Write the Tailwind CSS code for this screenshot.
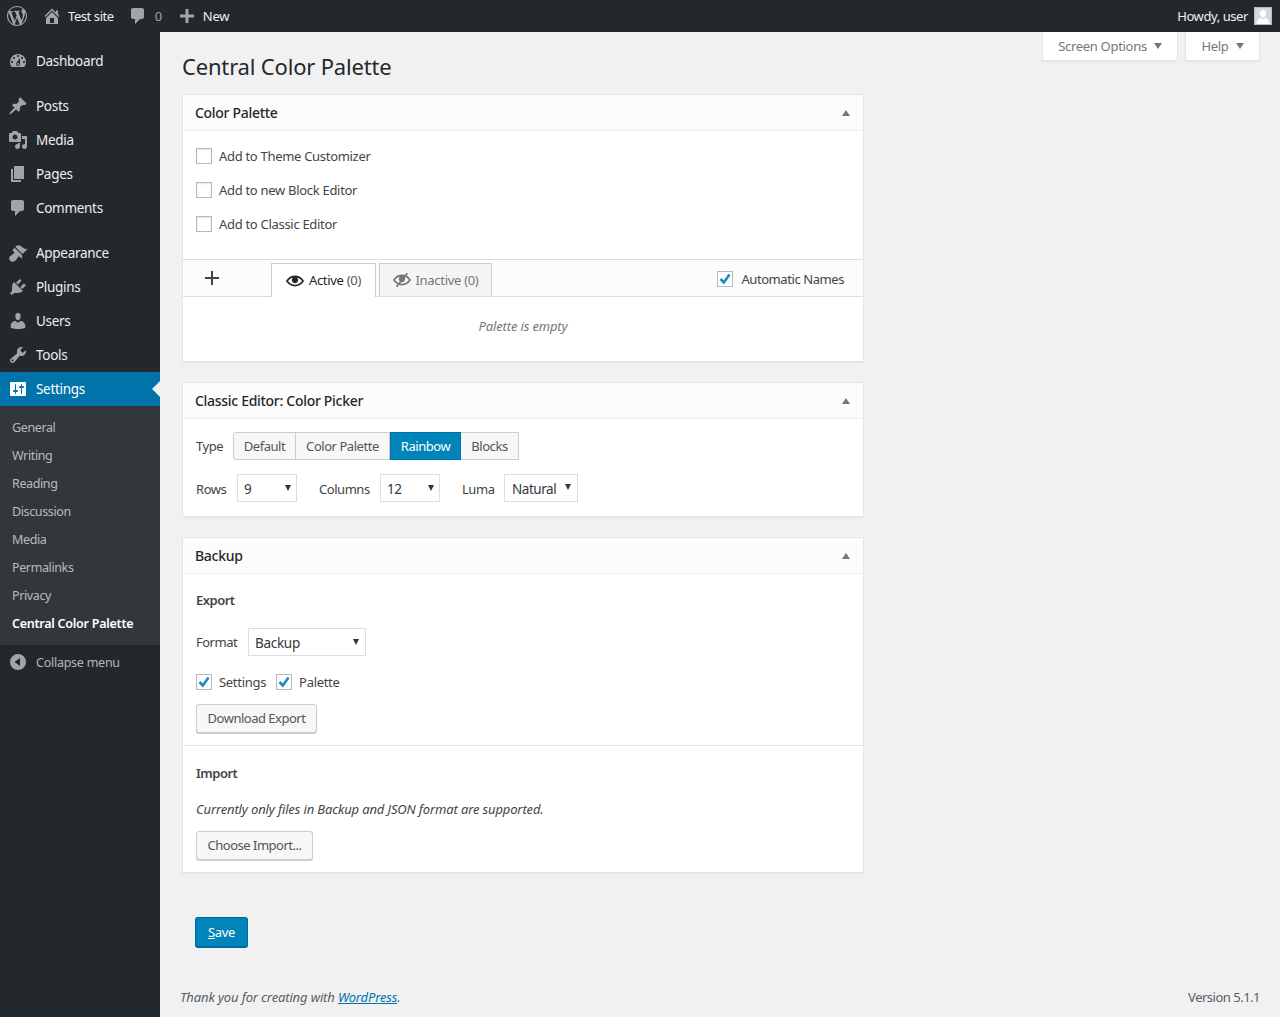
<!DOCTYPE html>
<html lang="en">
<head>
    <meta charset="UTF-8">
    <meta name="viewport" content="width=device-width, initial-scale=1.0">
    <title>Central Color Palette</title>
    <script src="https://cdn.jsdelivr.net/npm/@tailwindcss/browser@4"></script>
</head>
<body class="bg-[#f1f1f1] font-['Noto_Sans',sans-serif] text-[13px] text-[#444] tracking-[-0.3px]">
<div class="h-screen overflow-hidden flex flex-col">

    <!-- top bar -->
    <header class="h-8 shrink-0 bg-[#23282d] text-[#eee] flex items-center justify-between pl-[7px] pr-2 text-[13px] tracking-[-0.42px]">
        <div class="flex items-center">
            <svg class="w-5 h-5 fill-[#a0a5aa]" viewBox="0 0 20 20"><path d="M20 10c0-5.51-4.49-10-10-10C4.48 0 0 4.49 0 10c0 5.52 4.48 10 10 10 5.51 0 10-4.48 10-10zM7.78 15.37L4.37 6.22c.55-.02 1.17-.08 1.17-.08.5-.06.44-1.13-.06-1.11 0 0-1.45.11-2.37.11-.18 0-.37 0-.58-.01C4.12 2.69 6.87 1.11 10 1.11c2.33 0 4.45.87 6.05 2.34-.68-.11-1.65.39-1.65 1.58 0 .74.45 1.36.9 2.1.35.61.55 1.36.55 2.46 0 1.49-1.4 5-1.4 5l-3.03-8.37c.54-.02.82-.17.82-.17.5-.05.44-1.25-.06-1.22 0 0-1.44.12-2.38.12-.87 0-2.33-.12-2.33-.12-.5-.03-.56 1.2-.06 1.22l.92.08 1.26 3.41zM17.41 10c.24-.64.74-1.87.43-4.25.7 1.29 1.05 2.71 1.05 4.25 0 3.29-1.73 6.24-4.4 7.78.97-2.59 1.94-5.2 2.92-7.78zM6.1 18.09C3.12 16.65 1.11 13.53 1.11 10c0-1.3.23-2.48.72-3.59C3.25 10.3 4.67 14.2 6.1 18.09zm4.03-6.63l2.58 6.98c-.86.29-1.76.45-2.71.45-.79 0-1.57-.11-2.29-.33.81-2.38 1.62-4.74 2.42-7.1z"/></svg>
            <svg class="w-5 h-5 fill-[#a0a5aa] ml-[15px]" viewBox="0 0 20 20"><path d="M16 8.5l1.53 1.53-1.06 1.06L10 4.62l-6.47 6.47-1.06-1.06L10 2.5l4 4v-2h2v4zm-6-2.46l6 5.99V18H4v-5.97zM12 17v-5H8v5h4z"/></svg>
            <span class="ml-[6px] pt-[2px]">Test site</span>
            <svg class="w-5 h-5 fill-[#a0a5aa] ml-[14px]" viewBox="0 0 20 20"><path d="M5 2h9c1.1 0 2 .9 2 2v7c0 1.1-.9 2-2 2h-2l-5 5v-5H5c-1.1 0-2-.9-2-2V4c0-1.1.9-2 2-2z"/></svg>
            <span class="ml-[7px] pt-[2px] text-[#a0a5aa]">0</span>
            <svg class="w-5 h-5 fill-[#a0a5aa] ml-[15px]" viewBox="0 0 20 20"><path d="M17 8.500v3h-5.500V17h-3v-5.500H3v-3h5.500V3h3v5.500H17z"/></svg>
            <span class="ml-[6px] pt-[2px] tracking-[-0.3px]">New</span>
        </div>
        <div class="flex items-center gap-[6px]">
            <span class="pt-[2px]">Howdy, user</span>
            <span class="w-[18px] h-[18px] bg-[#d8d8d8] border border-[#bbb] flex items-end overflow-hidden">
                <svg class="w-4 h-4 fill-white" viewBox="0 0 16 16"><path d="M8 2c2 0 3 1.600 3 3.500S9.800 9.500 8 9.500 5 7.400 5 5.500 6 2 8 2zM1.500 16c0-3.500 2.500-5.500 4.500-6l2 1.500L10 10c2 .5 4.500 2.500 4.500 6z"/></svg>
            </span>
        </div>
    </header>

    <div class="flex flex-1 min-h-0">

        <!-- sidebar -->
        <nav class="w-40 shrink-0 bg-[#23282d] text-[#eee] text-[13.5px] pt-3">
            <a class="h-[34px] flex items-center pl-[8px] gap-[8px]"><svg class="w-5 h-5 fill-[#a0a5aa]" viewBox="0 0 20 20"><path d="M3.76 16h12.48c1.1-1.37 1.76-3.11 1.76-5 0-4.42-3.58-8-8-8s-8 3.58-8 8c0 1.89.66 3.63 1.76 5zM10 4c.55 0 1 .45 1 1s-.45 1-1 1-1-.45-1-1 .45-1 1-1zM6 6c.55 0 1 .45 1 1s-.45 1-1 1-1-.45-1-1 .45-1 1-1zm8 0c.55 0 1 .45 1 1s-.45 1-1 1-1-.45-1-1 .45-1 1-1zm-5.37 5.55L12 7v6c0 1.1-.9 2-2 2s-2-.9-2-2c0-.57.24-1.08.63-1.45zM4 10c.55 0 1 .45 1 1s-.45 1-1 1-1-.45-1-1 .45-1 1-1zm12 0c.55 0 1 .45 1 1s-.45 1-1 1-1-.45-1-1 .45-1 1-1zm-5 3c0-.55-.45-1-1-1s-1 .45-1 1 .45 1 1 1 1-.45 1-1z"/></svg><span>Dashboard</span></a>

            <a class="h-[34px] mt-[11px] flex items-center pl-[8px] gap-[8px]"><svg class="w-5 h-5 fill-[#a0a5aa]" viewBox="0 0 20 20"><path d="M10.44 3.02l1.82-1.82 6.36 6.35-1.83 1.82c-1.05-.68-2.48-.57-3.41.36l-.75.75c-.92.93-1.04 2.35-.35 3.41l-1.83 1.82-2.41-2.41-2.8 2.79c-.42.42-3.38 2.71-3.8 2.29s1.86-3.39 2.28-3.81l2.79-2.79L4.1 9.36l1.83-1.82c1.05.69 2.48.57 3.4-.36l.75-.75c.93-.92 1.05-2.35.36-3.41z"/></svg><span>Posts</span></a>
            <a class="h-[34px] flex items-center pl-[8px] gap-[8px]"><svg class="w-5 h-5 fill-[#a0a5aa]" viewBox="0 0 20 20"><path d="M13 11V4c0-.55-.45-1-1-1h-1.670L9 1H5L3.670 3H2c-.55 0-1 .45-1 1v7c0 .55.45 1 1 1h10c.55 0 1-.45 1-1zM7 4.500c1.380 0 2.500 1.120 2.500 2.500S8.380 9.500 7 9.500 4.500 8.380 4.500 7 5.620 4.500 7 4.500zM14 6h5v10.500c0 1.380-1.120 2.500-2.500 2.500S14 17.880 14 16.500s1.120-2.500 2.500-2.500c.17 0 .34.02.5.05V9h-3V6zm-4 8.050V13h2v3.500c0 1.380-1.120 2.500-2.500 2.500S7 17.880 7 16.500 8.120 14 9.500 14c.17 0 .34.02.5.05z"/></svg><span>Media</span></a>
            <a class="h-[34px] flex items-center pl-[8px] gap-[8px]"><svg class="w-5 h-5 fill-[#a0a5aa]" viewBox="0 0 20 20"><path d="M6 15V2h10v13H6zm-1 1h8v2H3V5h2v11z"/></svg><span>Pages</span></a>
            <a class="h-[34px] flex items-center pl-[8px] gap-[8px]"><svg class="w-5 h-5 fill-[#a0a5aa]" viewBox="0 0 20 20"><path d="M5 2h9c1.100 0 2 .9 2 2v7c0 1.100-.9 2-2 2h-2l-5 5v-5H5c-1.100 0-2-.9-2-2V4c0-1.100.9-2 2-2z"/></svg><span>Comments</span></a>

            <a class="h-[34px] mt-[11px] flex items-center pl-[8px] gap-[8px]"><svg class="w-5 h-5 fill-[#a0a5aa]" viewBox="0 0 20 20"><path d="M14.480 11.060L7.410 3.990l1.500-1.500c.5-.56 2.300-.47 3.510.32 1.210.8 1.430 1.280 2.910 2.100 1.180.64 2.450 1.260 4.450.85zm-.71.71L6.700 4.700 4.930 6.470c-.39.39-.39 1.020 0 1.410l1.060 1.060c.39.39.39 1.030 0 1.420-.6.6-1.430 1.110-2.210 1.690-.35.26-.7.53-1.010.84C1.430 13.250.28 15.110 2.050 17.800c2.690 1.770 4.550.62 5.910-.72.31-.31.58-.66.84-1.010.58-.78 1.090-1.610 1.690-2.210.39-.39 1.030-.39 1.420 0l1.060 1.060c.39.39 1.020.39 1.410 0z"/></svg><span>Appearance</span></a>
            <a class="h-[34px] flex items-center pl-[8px] gap-[8px]"><svg class="w-5 h-5 fill-[#a0a5aa]" viewBox="0 0 20 20"><path d="M13.110 4.360L9.870 7.600 8 5.730l3.240-3.240c.35-.34 1.050-.2 1.560.32.52.51.66 1.210.31 1.550zm-8 1.770l.91-1.120 9.010 9.010-1.190.84c-.71.71-2.630 1.160-3.820 1.160H6.140L4.900 17.260c-.59.59-1.540.59-2.120 0-.59-.58-.59-1.530 0-2.120l1.240-1.240v-3.880c0-1.130.4-3.190 1.090-3.890zm7.260 3.970l3.240-3.240c.34-.35 1.040-.21 1.550.31.52.51.66 1.210.31 1.550l-3.240 3.250z"/></svg><span>Plugins</span></a>
            <a class="h-[34px] flex items-center pl-[8px] gap-[8px]"><svg class="w-5 h-5 fill-[#a0a5aa]" viewBox="0 0 20 20"><path d="M10 9.250c-2.270 0-2.730-3.440-2.730-3.440C7 4.020 7.820 2 9.970 2c2.160 0 2.980 2.020 2.710 3.810 0 0-.41 3.440-2.680 3.440zm0 2.570L12.720 10c2.390 0 4.520 2.330 4.520 4.530v2.490s-3.650 1.130-7.240 1.130c-3.650 0-7.240-1.130-7.240-1.130v-2.490c0-2.250 1.940-4.480 4.470-4.480z"/></svg><span>Users</span></a>
            <a class="h-[34px] flex items-center pl-[8px] gap-[8px]"><svg class="w-5 h-5 fill-[#a0a5aa]" viewBox="0 0 20 20"><path d="M16.680 9.770c-1.340 1.340-3.300 1.670-4.950.99l-5.410 6.520c-.99.99-2.590.99-3.580 0s-.99-2.590 0-3.570l6.520-5.420c-.68-1.650-.35-3.610.99-4.950 1.280-1.280 3.120-1.620 4.720-1.060l-2.890 2.890 2.820 2.820 2.860-2.870c.53 1.580.18 3.390-1.080 4.650zM3.810 16.210c.4.39 1.040.39 1.430 0 .4-.4.4-1.040 0-1.430-.39-.4-1.030-.4-1.430 0-.39.39-.39 1.030 0 1.430z"/></svg><span>Tools</span></a>
            <a class="relative h-[34px] bg-[#0073aa] text-white flex items-center pl-[8px] gap-[8px]"><svg class="w-5 h-5 fill-white" viewBox="0 0 20 20"><path d="M18 16V4c0-.55-.45-1-1-1H3c-.55 0-1 .45-1 1v12c0 .55.45 1 1 1h14c.55 0 1-.45 1-1zM8 11h1c.55 0 1 .45 1 1s-.45 1-1 1H8v1.500c0 .28-.22.5-.5.5s-.5-.22-.5-.5V13H6c-.55 0-1-.45-1-1s.45-1 1-1h1V5.500c0-.28.22-.5.5-.5s.5.22.5.5V11zm5-2h-1c-.55 0-1-.45-1-1s.45-1 1-1h1V5.500c0-.28.22-.5.5-.5s.5.22.5.5V7h1c.55 0 1 .45 1 1s-.45 1-1 1h-1v5.500c0 .28-.22.5-.5.5s-.5-.22-.5-.5V9z"/></svg><span>Settings</span>
                <span class="absolute right-0 top-[9px] border-y-8 border-r-8 border-y-transparent border-r-[#f1f1f1]"></span>
            </a>
            <ul class="bg-[#32373c] text-[12.5px] tracking-[-0.38px] text-[#f0f5fa]/70 pt-[7px] pb-2">
                <li class="h-7 flex items-center pl-3"><span class="pt-[2px]">General</span></li>
                <li class="h-7 flex items-center pl-3"><span class="pt-[2px]">Writing</span></li>
                <li class="h-7 flex items-center pl-3"><span class="pt-[2px]">Reading</span></li>
                <li class="h-7 flex items-center pl-3"><span class="pt-[2px]">Discussion</span></li>
                <li class="h-7 flex items-center pl-3"><span class="pt-[2px]">Media</span></li>
                <li class="h-7 flex items-center pl-3"><span class="pt-[2px]">Permalinks</span></li>
                <li class="h-7 flex items-center pl-3"><span class="pt-[2px]">Privacy</span></li>
                <li class="h-7 flex items-center pl-3 font-semibold text-white tracking-[-0.25px]"><span class="pt-[2px]">Central Color Palette</span></li>
            </ul>
            <a class="h-[34px] flex items-center pl-[8px] gap-[8px] text-[12.5px] tracking-[-0.25px] text-[#f0f5fa]/70">
                <svg class="w-5 h-5 fill-[#a0a5aa]" viewBox="0 0 20 20"><path d="M10 2a8 8 0 1 0 0 16 8 8 0 0 0 0-16zm2 4v8L6.500 10 12 6z"/></svg><span class="pt-[2px]">Collapse menu</span></a>
        </nav>

        <!-- content -->
        <main class="flex-1 min-w-0 pl-[22px] pr-5 flex flex-col">
            <div class="h-[62px] shrink-0 flex justify-between items-start">
                <h1 class="text-[22px] leading-[29px] tracking-[-0.18px] text-[#23282d] pt-5">Central Color Palette</h1>
                <div class="flex gap-[7px] text-[13px] text-[#72777c]">
                    <button class="w-[136px] h-[29px] bg-white border-x border-b border-[#e5e5e5] shadow-[0_1px_1px_rgba(0,0,0,.04)] flex items-center justify-center gap-[7px]"><span class="pt-[2px]">Screen Options</span> <span class="border-x-[4px] border-t-[6px] border-x-transparent border-t-[#72777c]"></span></button>
                    <button class="w-[75px] h-[29px] bg-white border-x border-b border-[#e5e5e5] shadow-[0_1px_1px_rgba(0,0,0,.04)] flex items-center justify-center gap-[7px]"><span class="pt-[2px]">Help</span> <span class="border-x-[4px] border-t-[6px] border-x-transparent border-t-[#72777c]"></span></button>
                </div>
            </div>

            <!-- color palette -->
            <section class="w-[682px] bg-white border border-[#e5e5e5] shadow-[0_1px_1px_rgba(0,0,0,.04)]">
                <div class="h-9 border-b border-[#eee] bg-[#fcfcfc] flex items-center justify-between pl-3 pr-[13px]">
                    <h2 class="text-[14px] font-medium text-[#23282d]">Color Palette</h2>
                    <span class="border-x-[4px] border-b-[6px] border-x-transparent border-b-[#72777c]"></span>
                </div>
                <div class="pt-2 pb-[18px] pl-[13px]">
                    <label class="h-[34px] flex items-center gap-[7px]"><span class="w-4 h-4 bg-white border border-[#b4b9be] shadow-[inset_0_1px_2px_rgba(0,0,0,.1)]"></span><span class="pt-[2px]">Add to Theme Customizer</span></label>
                    <label class="h-[34px] flex items-center gap-[7px]"><span class="w-4 h-4 bg-white border border-[#b4b9be] shadow-[inset_0_1px_2px_rgba(0,0,0,.1)]"></span><span class="pt-[2px]">Add to new Block Editor</span></label>
                    <label class="h-[34px] flex items-center gap-[7px]"><span class="w-4 h-4 bg-white border border-[#b4b9be] shadow-[inset_0_1px_2px_rgba(0,0,0,.1)]"></span><span class="pt-[2px]">Add to Classic Editor</span></label>
                </div>
                <div class="h-[38px] bg-[#fcfcfc] border-y border-[#ddd] flex items-end">
                    <div class="w-[58px] mr-[30px] h-full flex items-center justify-center -mt-px">
                        <svg class="w-4 h-4 stroke-[#444] stroke-2" viewBox="0 0 16 16"><path d="M8 1v14M1 8h14"/></svg>
                    </div>
                    <div class="w-[105px] h-[34px] -mb-px bg-white border-x border-t border-[#ccc] flex items-center justify-center gap-[5px] text-[#23282d]">
                        <svg class="w-[18px] h-[18px] fill-[#23282d]" viewBox="0 0 20 20"><path d="M19.700 9.400C17.700 6 14 3.900 10 3.900S2.300 6 .3 9.400L0 10l.3.6c2 3.400 5.700 5.500 9.700 5.500s7.700-2.100 9.700-5.500l.3-.6-.3-.6zM10 14.100c-3.100 0-6-1.600-7.700-4.100C3.600 8 5.700 6.600 8 6.100c-.9.6-1.500 1.700-1.500 2.900 0 1.900 1.600 3.500 3.500 3.500s3.500-1.600 3.500-3.500c0-1.200-.6-2.300-1.500-2.900 2.300.5 4.400 1.900 5.700 3.900-1.700 2.500-4.600 4.100-7.700 4.100z"/></svg>
                        <span>Active <span class="text-[#555]">(0)</span></span>
                    </div>
                    <div class="w-[113px] h-[33px] ml-[3px] bg-[#f5f5f5] border-x border-t border-[#ccc] flex items-center justify-center gap-[5px] text-[#72777c]">
                        <svg class="w-[18px] h-[18px] fill-[#72777c] stroke-[#72777c]" viewBox="0 0 20 20"><path stroke="none" d="M19.700 9.400C17.700 6 14 3.900 10 3.900S2.300 6 .3 9.400L0 10l.3.6c2 3.400 5.700 5.500 9.700 5.500s7.700-2.100 9.700-5.500l.3-.6-.3-.6zM10 14.100c-3.100 0-6-1.600-7.700-4.100C3.600 8 5.700 6.600 8 6.100c-.9.6-1.500 1.700-1.500 2.900 0 1.900 1.600 3.500 3.500 3.500s3.500-1.600 3.500-3.500c0-1.200-.6-2.300-1.500-2.900 2.300.5 4.400 1.900 5.700 3.900-1.700 2.500-4.600 4.100-7.700 4.100z"/><path stroke-width="2" d="M16 2.500L4 17.500"/></svg>
                        <span class="pt-[2px]">Inactive (0)</span>
                    </div>
                    <label class="ml-auto h-full flex items-center gap-2 pr-[19px] pt-[2px] tracking-[-0.42px]">
                        <span class="w-4 h-4 bg-white border border-[#b4b9be] flex items-center justify-center"><svg class="w-[14px] h-[14px] fill-none stroke-[#1e8cbe] stroke-[2.6]" viewBox="0 0 14 14"><path d="M2.500 7L5.800 10.500L11.500 2.500"/></svg></span>
                        <span class="pt-[2px]">Automatic Names</span>
                    </label>
                </div>
                <p class="h-[64px] flex items-center justify-center italic tracking-[-0.14px] text-[#72777c] pb-[4px]">Palette is empty</p>
            </section>

            <!-- color picker -->
            <section class="w-[682px] mt-5 bg-white border border-[#e5e5e5] shadow-[0_1px_1px_rgba(0,0,0,.04)]">
                <div class="h-9 border-b border-[#eee] bg-[#fcfcfc] flex items-center justify-between pl-3 pr-[13px]">
                    <h2 class="text-[14px] font-medium text-[#23282d]">Classic Editor: Color Picker</h2>
                    <span class="border-x-[4px] border-b-[6px] border-x-transparent border-b-[#72777c]"></span>
                </div>
                <div class="pt-[13px] pl-[13px] pb-[14px] tracking-[-0.45px]">
                    <div class="flex items-center">
                        <span class="w-[37px] pt-[2px]">Type</span>
                        <div class="flex h-7 text-[#555]">
                            <span class="w-[63px] pt-[2px] bg-[#f7f7f7] border border-[#ccc] rounded-l-[3px] flex items-center justify-center">Default</span>
                            <span class="w-[95px] pt-[2px] -ml-px bg-[#f7f7f7] border border-[#ccc] flex items-center justify-center">Color Palette</span>
                            <span class="w-[71px] pt-[2px] bg-[#0085ba] border border-[#0073aa] text-white flex items-center justify-center">Rainbow</span>
                            <span class="w-[58px] pt-[2px] bg-[#f7f7f7] border border-l-0 border-[#ccc] flex items-center justify-center">Blocks</span>
                        </div>
                    </div>
                    <div class="flex items-center mt-[14px]">
                        <span class="w-[41px] pt-[3px]">Rows</span>
                        <div class="relative">
                            <select class="block appearance-none w-[60px] h-7 bg-white border border-[#ddd] pl-[6px] pt-[2px] text-[13.5px] text-[#32373c]"><option>9</option></select>
                            <span class="absolute top-[11px] right-[6px] border-x-[3px] border-t-[6px] border-x-transparent border-t-[#32373c]"></span>
                        </div>
                        <span class="ml-[22px] w-[61px] pt-[3px]">Columns</span>
                        <div class="relative">
                            <select class="block appearance-none w-[60px] h-7 bg-white border border-[#ddd] pl-[6px] pt-[2px] text-[13.5px] text-[#32373c]"><option>12</option></select>
                            <span class="absolute top-[11px] right-[6px] border-x-[3px] border-t-[6px] border-x-transparent border-t-[#32373c]"></span>
                        </div>
                        <span class="ml-[22px] w-[42px] pt-[3px]">Luma</span>
                        <div class="relative">
                            <select class="block appearance-none w-[74px] h-7 bg-white border border-[#ddd] pl-[7px] pt-[2px] text-[13.5px] text-[#32373c]"><option>Natural</option></select>
                            <span class="absolute top-[10px] right-[7px] border-x-[3px] border-t-[6px] border-x-transparent border-t-[#32373c]"></span>
                        </div>
                    </div>
                </div>
            </section>

            <!-- backup -->
            <section class="w-[682px] mt-5 bg-white border border-[#e5e5e5] shadow-[0_1px_1px_rgba(0,0,0,.04)]">
                <div class="h-9 border-b border-[#eee] bg-[#fcfcfc] flex items-center justify-between pl-3 pr-[13px]">
                    <h2 class="text-[14px] font-medium text-[#23282d]">Backup</h2>
                    <span class="border-x-[4px] border-b-[6px] border-x-transparent border-b-[#72777c]"></span>
                </div>
                <div class="h-[172px] pl-[13px] border-b border-[#e5e5e5]">
                    <h3 class="pt-[17px] leading-[18px] font-semibold tracking-[-0.5px]">Export</h3>
                    <div class="flex items-center mt-[19px]">
                        <span class="w-[52px] pt-[2px] tracking-[-0.5px]">Format</span>
                        <div class="relative">
                            <select class="block appearance-none w-[118px] h-7 bg-white border border-[#ddd] pl-[6px] pt-[2px] text-[13.5px] text-[#32373c]"><option>Backup</option></select>
                            <span class="absolute top-[11px] right-[7px] border-x-[3px] border-t-[6px] border-x-transparent border-t-[#32373c]"></span>
                        </div>
                    </div>
                    <div class="flex items-center mt-[18px] h-4">
                        <span class="w-4 h-4 bg-white border border-[#b4b9be] flex items-center justify-center"><svg class="w-[14px] h-[14px] fill-none stroke-[#1e8cbe] stroke-[2.6]" viewBox="0 0 14 14"><path d="M2.500 7L5.800 10.500L11.500 2.500"/></svg></span>
                        <span class="ml-[7px] pt-[2px]">Settings</span>
                        <span class="ml-[10px] w-4 h-4 bg-white border border-[#b4b9be] flex items-center justify-center"><svg class="w-[14px] h-[14px] fill-none stroke-[#1e8cbe] stroke-[2.6]" viewBox="0 0 14 14"><path d="M2.500 7L5.800 10.500L11.500 2.500"/></svg></span>
                        <span class="ml-[7px] pt-[2px]">Palette</span>
                    </div>
                    <button class="mt-[14px] w-[121px] h-[29px] bg-[#f7f7f7] border border-[#ccc] rounded-[3px] shadow-[0_1px_0_#ccc] text-[#555] tracking-[-0.5px]">Download Export</button>
                </div>
                <div class="h-[126px] pl-[13px]">
                    <h3 class="pt-[18px] leading-[18px] font-semibold tracking-[-0.5px]">Import</h3>
                    <p class="mt-[18px] leading-[18px] italic tracking-[-0.14px]">Currently only files in Backup and JSON format are supported.</p>
                    <button class="mt-[13px] w-[117px] h-[29px] bg-[#f7f7f7] border border-[#ccc] rounded-[3px] shadow-[0_1px_0_#ccc] text-[#555] tracking-[-0.5px]">Choose Import...</button>
                </div>
            </section>

            <button class="mt-[44px] ml-[13px] w-[53px] h-[31px] pt-[2px] bg-[#0085ba] border border-[#006799] border-b-2 rounded-[3px] text-white"><span class="underline">S</span>ave</button>

            <footer class="mt-auto h-[29px] -ml-[2px] flex justify-between text-[#555d66]">
                <span class="italic tracking-[-0.14px]">Thank you for creating with <a class="text-[#0073aa] underline">WordPress</a>.</span>
                <span class="tracking-[-0.5px]">Version 5.1.1</span>
            </footer>
        </main>
    </div>
</div>
</body>
</html>
